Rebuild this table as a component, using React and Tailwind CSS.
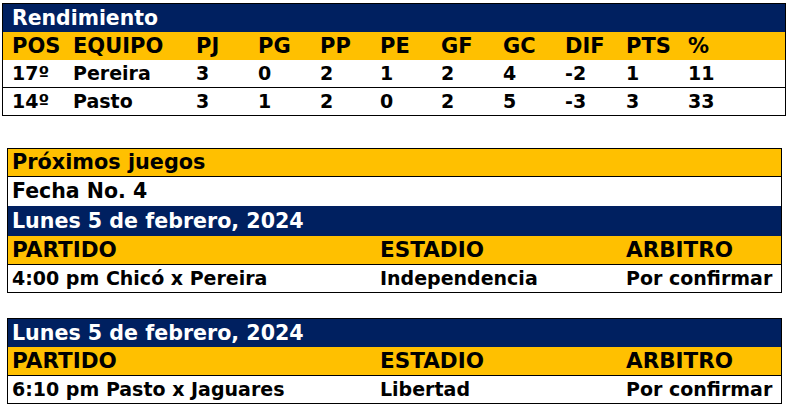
const NAVY = "bg-[#002060] text-white";
const GOLD = "bg-[#ffc000] text-black";

const standings = [
  ["17º", "Pereira", "3", "0", "2", "1", "2", "4", "-2", "1", "11"],
  ["14º", "Pasto", "3", "1", "2", "0", "2", "5", "-3", "3", "33"],
];

const headers = ["POS", "EQUIPO", "PJ", "PG", "PP", "PE", "GF", "GC", "DIF", "PTS", "%"];

const cols = "grid grid-cols-[61px_123px_62px_62px_60px_61px_62px_62px_61px_62px_1fr]";

function StatRow({ cells, className }) {
  return (
    <div className={`${cols} items-center ${className}`}>
      {cells.map((c, i) => (
        <span key={i} className="pl-[9px] whitespace-nowrap">
          {c}
        </span>
      ))}
    </div>
  );
}

function MatchBlock({ date, time, stadium, referee, first }) {
  const matchCols = "grid grid-cols-[368px_246px_1fr] items-center";
  return (
    <>
      <div className={`${NAVY} flex items-center pl-[4px] text-[20.6px] ${first ? "h-[30px]" : "h-[28px]"}`}>{date}</div>
      <div className={`${GOLD} ${matchCols} h-[29px] border-b border-black text-[21.5px]`}>
        <span className="pl-[4px]">PARTIDO</span>
        <span className="pl-[4px]">ESTADIO</span>
        <span className="pl-[4px]">ARBITRO</span>
      </div>
      <div className={`${matchCols} h-[27px] bg-white`}>
        <span className="pl-[4px] whitespace-nowrap">{time}</span>
        <span className="pl-[4px] whitespace-nowrap">{stadium}</span>
        <span className="pl-[4px] whitespace-nowrap">{referee}</span>
      </div>
    </>
  );
}

export default function App() {
  return (
    <div className="min-h-[406px] w-[787px] bg-white text-[19px] font-bold leading-none text-black [font-family:'DejaVu_Sans',Verdana,sans-serif]">
      <div className="pl-[2px] pt-[3px]">
        <div className="w-[784px] border border-black">
          <div className={`${NAVY} flex h-[28px] items-center pl-[9px] text-[20.4px]`}>Rendimiento</div>
          <StatRow cells={headers} className={`${GOLD} h-[28px] text-[21px]`} />
          {standings.map((r, i) => (
            <StatRow
              key={i}
              cells={r}
              className={`bg-white ${i === 0 ? "h-[28px] border-b border-black" : "h-[27px]"}`}
            />
          ))}
        </div>
      </div>

      <div className="pl-[7px] pt-[32px]">
        <div className="w-[775px] border border-black">
          <div className={`${GOLD} flex h-[28px] items-center border-b border-black pl-[4px] text-[20.8px]`}>Próximos juegos</div>
          <div className="flex h-[29px] items-center bg-white pl-[4px] text-[20.5px]">Fecha No. 4</div>
          <MatchBlock
            first
            date="Lunes 5 de febrero, 2024"
            time="4:00 pm Chicó x Pereira"
            stadium="Independencia"
            referee="Por confirmar"
          />
        </div>
      </div>

      <div className="pl-[7px] pt-[25px]">
        <div className="w-[775px] border border-black">
          <MatchBlock
            date="Lunes 5 de febrero, 2024"
            time="6:10 pm Pasto x Jaguares"
            stadium="Libertad"
            referee="Por confirmar"
          />
        </div>
      </div>
    </div>
  );
}
